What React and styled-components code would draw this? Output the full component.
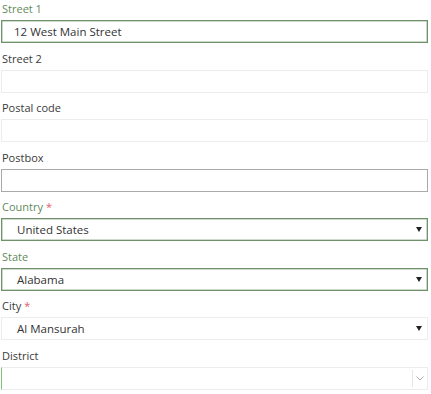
import React from "react";
import styled, { createGlobalStyle, css } from "styled-components";

const GlobalStyle = createGlobalStyle`
  body {
    margin: 0;
    background: #fff;
    font-family: "Open Sans", "Liberation Sans", sans-serif;
  }
`;

const Form = styled.form`
  display: flex;
  flex-direction: column;
  gap: 6.5px;
  padding: 0 3px 0 1px;
  width: 431px;
  box-sizing: border-box;
`;

const Field = styled.div`
  display: flex;
  flex-direction: column;
  gap: 3px;
`;

const Label = styled.label`
  font-size: 11px;
  line-height: 17px;
  height: 17px;
  padding-left: 1px;
  color: ${(p) => (p.$active ? "#5f8a5c" : "#3a3a3a")};
`;

const Star = styled.span`
  color: #e0606a;
  margin-left: 3px;
`;

const borders = {
  focus: css`
    border: 1px solid #6f926b;
    box-shadow: inset 0 0 0 0.5px #9bb598;
  `,
  light: css`
    border: 1px solid #ececec;
  `,
  gray: css`
    border: 1px solid #a9a9a9;
  `,
  district: css`
    border: 1px solid #ececec;
    border-left: 1px solid #7fc27f;
  `,
};

const Box = styled.div`
  display: flex;
  align-items: center;
  height: 23px;
  box-sizing: border-box;
  background: #fff;
  ${(p) => borders[p.$variant]}
`;

const Value = styled.span`
  flex: 1;
  font-size: 11.5px;
  color: #333;
  padding-left: ${(p) => (p.$select ? "15px" : "12px")};
  white-space: nowrap;
`;

const Caret = styled.span`
  width: 0;
  height: 0;
  border-left: 3.5px solid transparent;
  border-right: 3.5px solid transparent;
  border-top: 5px solid #222;
  margin-right: 5px;
`;

const Sep = styled.span`
  align-self: stretch;
  width: 1px;
  margin: 2px 0;
  background: #e6e6e6;
`;

const Chevron = styled.span`
  width: 14px;
  display: flex;
  justify-content: center;
  color: #999;
`;

function TextField({ label, value, variant, active }) {
  return (
    <Field>
      <Label $active={active}>{label}</Label>
      <Box $variant={variant}>
        <Value>{value}</Value>
      </Box>
    </Field>
  );
}

function SelectField({ label, value, variant, active, required }) {
  return (
    <Field>
      <Label $active={active}>
        {label}
        {required && <Star>*</Star>}
      </Label>
      <Box $variant={variant}>
        <Value $select>{value}</Value>
        <Caret />
      </Box>
    </Field>
  );
}

export default function App() {
  return (
    <>
      <GlobalStyle />
      <Form>
        <TextField label="Street 1" value="12 West Main Street" variant="focus" active />
        <TextField label="Street 2" variant="light" />
        <TextField label="Postal code" variant="light" />
        <TextField label="Postbox" variant="gray" />
        <SelectField label="Country" value="United States" variant="focus" active required />
        <SelectField label="State" value="Alabama" variant="focus" active />
        <SelectField label="City" value="Al Mansurah" variant="light" required />
        <Field>
          <Label>District</Label>
          <Box $variant="district">
            <Value />
            <Sep />
            <Chevron>
              <svg width="8" height="5" viewBox="0 0 8 5">
                <path d="M0.5 0.5 L4 4 L7.5 0.5" fill="none" stroke="#aaa" strokeWidth="1" />
              </svg>
            </Chevron>
          </Box>
        </Field>
      </Form>
    </>
  );
}
